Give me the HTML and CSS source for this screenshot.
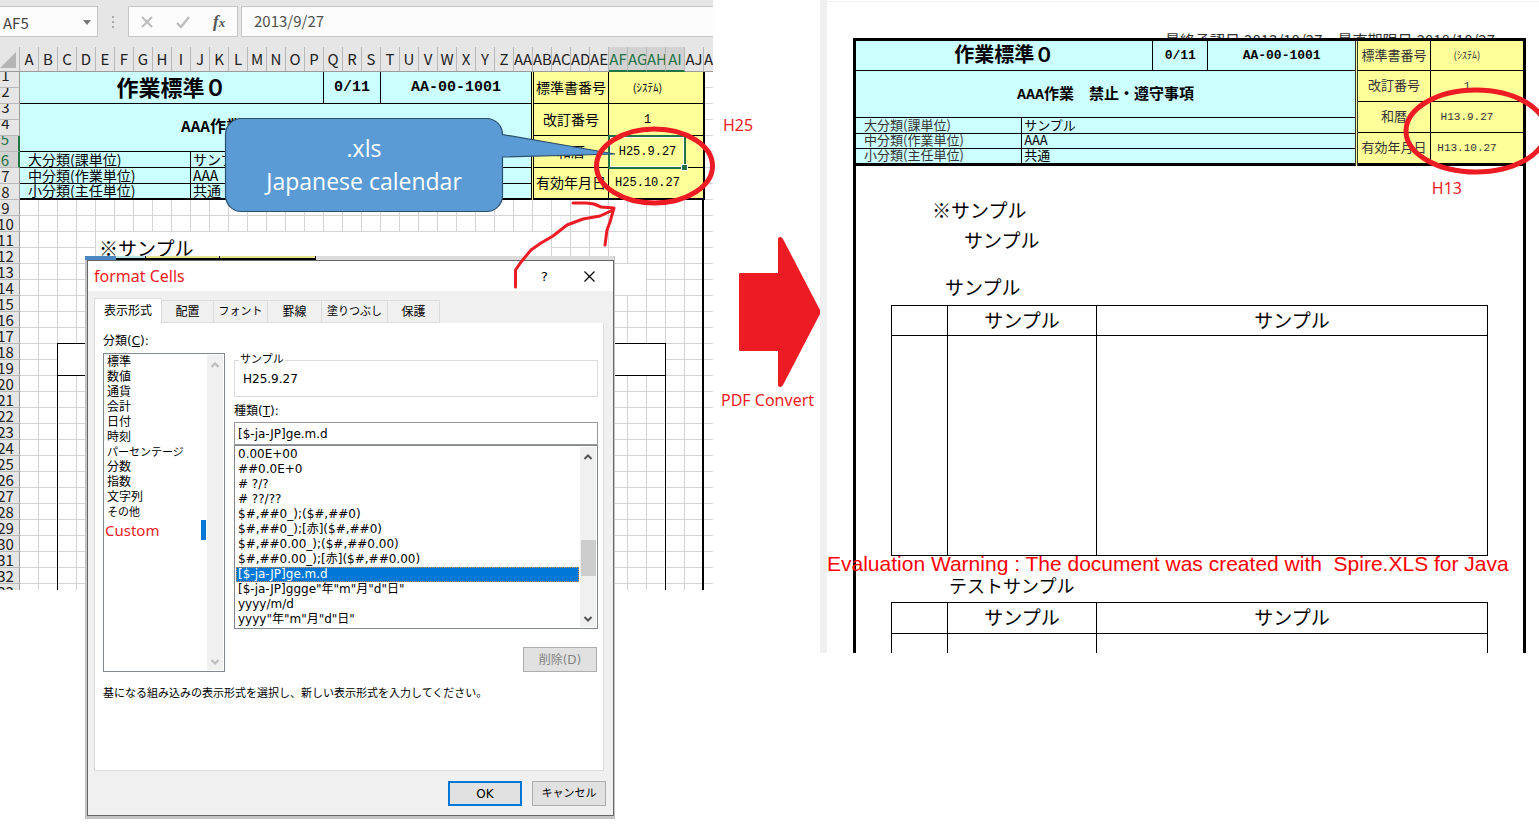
FILE: index.html
```html
<!DOCTYPE html>
<html lang="ja">
<head>
<meta charset="utf-8">
<title>PDF Convert</title>
<link rel="stylesheet" href="styles.css">
</head>
<body>
<main class="board">
  <section class="excel">
    <div class="formula-bar">
      <div class="name-box"><span>AF5</span><svg width="8" height="5" viewBox="0 0 8 5"><path d="M0 0h8L4 5z" fill="#777"/></svg></div>
      <svg class="dots" width="3" height="12" viewBox="0 0 3 12"><path d="M0 0h2v2H0zM0 5h2v2H0zM0 10h2v2H0z" fill="#aaa"/></svg>
      <div class="fx-box">
        <svg width="12" height="12" viewBox="0 0 12 12"><path d="M1 1l10 10M11 1L1 11" stroke="#bcbcbc" stroke-width="2" fill="none"/></svg>
        <svg width="14" height="12" viewBox="0 0 14 12"><path d="M1 7l4 4L13 1" stroke="#bcbcbc" stroke-width="2.4" fill="none"/></svg>
        <span class="fx">f<small>x</small></span>
      </div>
      <input class="formula" type="text" value="2013/9/27" aria-label="数式">
    </div>
    <div class="cols">
      <div class="corner"><svg width="16" height="16" viewBox="0 0 16 16"><path d="M16 0v16H0z" fill="#b5b5b5"/></svg></div>
      <div>A</div><div>B</div><div>C</div><div>D</div><div>E</div><div>F</div><div>G</div><div>H</div><div>I</div><div>J</div><div>K</div><div>L</div><div>M</div><div>N</div><div>O</div><div>P</div><div>Q</div><div>R</div><div>S</div><div>T</div><div>U</div><div>V</div><div>W</div><div>X</div><div>Y</div><div>Z</div><div>AA</div><div>AB</div><div>AC</div><div>AD</div><div>AE</div><div class="on">AF</div><div class="on">AG</div><div class="on">AH</div><div class="on">AI</div><div>AJ</div><div>AK</div>
    </div>
    <div class="sheet">
      <div class="rows">
        <div class="cut">1</div><div class="cut">2</div><div class="cut">3</div><div class="cut">4</div><div class="cut on">5</div><div class="on">6</div><div>7</div><div>8</div><div>9</div><div>10</div><div>11</div><div>12</div><div>13</div><div>14</div><div>15</div><div>16</div><div>17</div><div>18</div><div>19</div><div>20</div><div>21</div><div>22</div><div>23</div><div>24</div><div>25</div><div>26</div><div>27</div><div>28</div><div>29</div><div>30</div><div>31</div><div>32</div><div>33</div>
      </div>
      <div class="canvas">
        <div class="form-head">
          <table class="cyan">
            <colgroup><col class="w171"><col class="w133"><col class="w57"><col class="w151"></colgroup>
            <tr class="h32"><th colspan="2" class="title">作業標準０</th><th class="code">0/11</th><th class="code">AA-00-1001</th></tr>
            <tr class="h48"><th colspan="4" class="subject"><span class="latin">AAA</span>作業　禁止・遵守事項</th></tr>
            <tr class="h16"><td class="kind">大分類(課単位)</td><td colspan="3">サンプル</td></tr>
            <tr class="h16"><td class="kind">中分類(作業単位)</td><td colspan="3">AAA</td></tr>
            <tr class="h16"><td class="kind">小分類(主任単位)</td><td colspan="3">共通</td></tr>
          </table>
          <table class="yellow">
            <colgroup><col class="w75"><col class="w95"></colgroup>
            <tr class="h32"><td>標準書番号</td><td class="val small">(ｼｽﾃﾑ)</td></tr>
            <tr class="h32"><td>改訂番号</td><td class="val">1</td></tr>
            <tr class="h32"><td>和暦</td><td class="val">H25.9.27</td></tr>
            <tr class="h32"><td>有効年月日</td><td class="val">H25.10.27</td></tr>
          </table>
        </div>
        <div class="right-rule"></div>
        <div class="merged merged-a">※サンプル</div>
        <div class="merged merged-b"></div>
        <div class="outline"><div class="outline-head"></div></div>
        <div class="selection"></div>
      </div>
    </div>
  </section>

  <section class="between">
    <p class="note note-h25">H25</p>
    <svg class="big-arrow" width="82" height="150" viewBox="0 0 82 150"><path d="M0 37q0-1 1-1H39V2q0-2 2-2t3 2L82 75 44 148q-1 2-3 2t-2-2V114H1q-1 0-1-1z" fill="#ed1c24"/></svg>
    <p class="note note-pdf">PDF Convert</p>
  </section>

  <section class="pdf">
    <div class="dates">最終承認日:2013/10/27　最直期限日:2018/10/27</div>
    <div class="page-frame">
      <div class="form-head">
        <table class="cyan">
          <colgroup><col class="p166"><col class="p131"><col class="p55"><col></colgroup>
          <tr class="h30"><th colspan="2" class="title">作業標準０</th><th class="code">0/11</th><th class="code">AA-00-1001</th></tr>
          <tr class="h47"><th colspan="4" class="subject"><span class="latin">AAA</span>作業　禁止・遵守事項</th></tr>
          <tr class="h16"><td class="kind">大分類(課単位)</td><td colspan="3">サンプル</td></tr>
          <tr class="h15"><td class="kind">中分類(作業単位)</td><td colspan="3">AAA</td></tr>
          <tr class="h17"><td class="kind">小分類(主任単位)</td><td colspan="3">共通</td></tr>
        </table>
        <table class="yellow">
          <colgroup><col class="p73"><col></colgroup>
          <tr class="h30"><td>標準書番号</td><td class="val small">(ｼｽﾃﾑ)</td></tr>
          <tr class="h31"><td>改訂番号</td><td class="val">1</td></tr>
          <tr class="h31"><td>和暦</td><td class="val">H13.9.27</td></tr>
          <tr class="h33"><td>有効年月日</td><td class="val">H13.10.27</td></tr>
        </table>
      </div>
      <div class="page-body">
        <p class="line first">※サンプル</p>
        <p class="line second">サンプル</p>
        <p class="line third">サンプル</p>
        <table class="sample">
          <colgroup><col class="s57"><col class="s149"><col></colgroup>
          <tr class="h30"><td></td><td>サンプル</td><td>サンプル</td></tr>
          <tr class="h220"><td></td><td></td><td></td></tr>
        </table>
        <p class="line fourth">テストサンプル</p>
        <table class="sample">
          <colgroup><col class="s57"><col class="s149"><col></colgroup>
          <tr class="h31"><td></td><td>サンプル</td><td>サンプル</td></tr>
          <tr class="h220"><td></td><td></td><td></td></tr>
        </table>
      </div>
    </div>
    <p class="warning">Evaluation Warning : The document was created with&nbsp; Spire.XLS for Java</p>
    <p class="note note-h13">H13</p>
    <svg class="pdf-ring" width="144" height="90" viewBox="0 0 144 90"><ellipse cx="73" cy="45" rx="70" ry="41" fill="none" stroke="#ed1c24" stroke-width="5"/></svg>
  </section>

  <svg class="callout" width="394" height="96" viewBox="0 0 394 96"><path d="M17.500 1.500H262.500a16 16 0 0 1 16 16L391 37 278.500 40V78.500a16 16 0 0 1-16 16H17.500a16 16 0 0 1-16-16V17.500a16 16 0 0 1 16-16z" fill="#5b9bd5" stroke="#2b506e" stroke-width="1.200"/></svg>
  <div class="callout-text">.xls<br>Japanese calendar</div>

  <div class="shot">
    <div class="strip"><i class="blue"></i><i class="aqua"></i><i class="lemon"></i><i class="lemon wide"></i></div>
    <section class="dialog" role="dialog" aria-labelledby="dlg-title">
      <header class="titlebar">
        <h1 id="dlg-title">format Cells</h1>
        <button class="icon-btn" aria-label="ヘルプ">?</button>
        <button class="icon-btn" aria-label="閉じる"><svg width="11" height="11" viewBox="0 0 11 11"><path d="M.5.5l10 10M10.500.5l-10 10" stroke="#000" stroke-width="1.200" fill="none"/></svg></button>
      </header>
      <nav class="tabs">
        <button class="tab active">表示形式</button><button class="tab t52">配置</button><button class="tab t54 kana">フォント</button><button class="tab t54">罫線</button><button class="tab t66 kana">塗りつぶし</button><button class="tab t52">保護</button>
      </nav>
      <div class="panel">
        <div class="panel-cols">
          <div class="left">
            <div class="label">分類(<u>C</u>):</div>
            <div class="listbox cats">
              <ul>
                <li>標準</li><li>数値</li><li>通貨</li><li>会計</li><li>日付</li><li>時刻</li><li class="kana">パーセンテージ</li><li>分数</li><li>指数</li><li>文字列</li><li class="kana">その他</li><li class="custom">Custom</li>
              </ul>
              <div class="scroll pale">
                <svg width="8" height="6" viewBox="0 0 8 6"><path d="M.5 5L4 1.500 7.500 5" fill="none" stroke="#bbb" stroke-width="2"/></svg>
                <svg width="8" height="6" viewBox="0 0 8 6"><path d="M.5 1L4 4.500 7.500 1" fill="none" stroke="#bbb" stroke-width="2"/></svg>
              </div>
            </div>
          </div>
          <div class="right">
            <fieldset><legend>サンプル</legend>H25.9.27</fieldset>
            <label class="label" for="fmt">種類(<u>T</u>):</label>
            <input id="fmt" type="text" value="[$-ja-JP]ge.m.d">
            <div class="listbox formats">
              <ul>
                <li>0.00E+00</li><li>##0.0E+0</li><li># ?/?</li><li># ??/??</li><li>$#,##0_);($#,##0)</li><li>$#,##0_);[赤]($#,##0)</li><li>$#,##0.00_);($#,##0.00)</li><li>$#,##0.00_);[赤]($#,##0.00)</li><li class="picked">[$-ja-JP]ge.m.d</li><li>[$-ja-JP]ggge"年"m"月"d"日"</li><li>yyyy/m/d</li><li>yyyy"年"m"月"d"日"</li>
              </ul>
              <div class="scroll">
                <svg width="8" height="6" viewBox="0 0 8 6"><path d="M.5 5L4 1.500 7.500 5" fill="none" stroke="#555" stroke-width="2"/></svg>
                <div class="thumb"></div>
                <svg width="8" height="6" viewBox="0 0 8 6"><path d="M.5 1L4 4.500 7.500 1" fill="none" stroke="#555" stroke-width="2"/></svg>
              </div>
            </div>
            <button class="btn delete" disabled>削除(D)</button>
          </div>
        </div>
        <p class="help">基になる組み込みの表示形式を選択し、新しい表示形式を入力してください。</p>
      </div>
      <footer class="actions">
        <button class="btn ok">OK</button>
        <button class="btn kana">キャンセル</button>
      </footer>
    </section>
  </div>

  <svg class="ink" width="720" height="300" viewBox="0 0 720 300" fill="none" stroke="#ed1c24" stroke-linecap="round" stroke-linejoin="round">
    <ellipse cx="654.500" cy="166" rx="58" ry="37" stroke-width="5"/>
    <path stroke-width="3" d="M515.500 287V270L521 262 531 250 541 243 553 236 567 225 583 219 600 216 613 210M573 203H586L594 204 601 207 614 208 610 222 607 230 605 245"/>
  </svg>
</main>
</body>
</html>
```

FILE: styles.css
```css
* { box-sizing: border-box; }

body {
  margin: 0;
  background: #fff;
  color: #000;
  font-family: "Noto Sans CJK JP", sans-serif;
}

p, h1, ul { margin: 0; padding: 0; list-style: none; font-weight: 400; }
button, input { font: inherit; color: inherit; }
svg { display: block; }
table { border-collapse: separate; border-spacing: 0; table-layout: fixed; }
td, th { padding: 0; overflow: hidden; white-space: nowrap; }

.board {
  position: relative;
  display: grid;
  grid-template-columns: 713px 107px minmax(0, 1fr);
  align-items: start;
  min-height: 100vh;
  overflow: hidden;
}

/* Spreadsheet window */
.excel { height: 590px; overflow: hidden; background: #e6e6e6; }

.formula-bar { display: flex; align-items: center; height: 47px; padding: 6px 0 10px; }
.name-box, .fx-box, .formula { height: 31px; background: #fcfcfc; border: 1px solid #c6c6c6; }
.name-box {
  display: flex; align-items: center; justify-content: space-between;
  width: 98px; padding: 2px 6px 0 3px; border-left: 0;
  font-size: 15px; color: #444;
}
.dots { margin: 0 13px 0 14px; }
.fx-box { display: flex; align-items: center; gap: 23px; width: 110px; padding-left: 12px; }
.fx { font: italic bold 17px "Liberation Serif", serif; color: #555; }
.fx small { font-size: 13px; }
.formula {
  flex: 1; min-width: 0; margin-left: 3px; padding: 0 12px 2px; border-right: 0;
  font-size: 15px; color: #505050; outline: 0; border-radius: 0;
}

.cols { display: flex; height: 25px; border-bottom: 1px solid #9b9b9b; }
.cols div {
  flex: none; width: 19px; overflow: hidden;
  border-right: 1px solid #b8b8b8;
  font-size: 15px; line-height: 24px; text-align: center; color: #222;
}
.cols .corner { display: flex; justify-content: flex-end; align-items: flex-end; width: 20px; padding: 0 3px 3px 0; }
.cols .on { height: 25px; background: #d2d2d2; color: #217346; border-bottom: 2px solid #217346; }

.sheet { display: flex; }
.rows { flex: none; width: 20px; }
.rows div {
  display: flex; justify-content: center;
  height: 16px; overflow: hidden; padding-right: 8px;
  border-bottom: 1px solid #b8b8b8; border-right: 1px solid #9b9b9b;
  font-size: 15px; line-height: 15px; color: #222;
}
.rows .cut { line-height: 6px; }
.rows .on { background: #d2d2d2; color: #217346; border-right: 2px solid #217346; }

.canvas {
  position: relative; flex: 1; height: 528px; overflow: hidden;
  background:
    linear-gradient(to right, transparent 18px, #d4d4d4 18px) 0 0 / 19px 16px,
    linear-gradient(to bottom, transparent 15px, #d4d4d4 15px) 0 0 / 19px 16px,
    #fff;
}

/* Form heading shared by the sheet and the page */
.form-head { display: flex; }
.cyan { background: #cff; }
.yellow { background: #ff9; }
.form-head td, .form-head th { padding-bottom: 2px; border-right: 1px solid #000; border-bottom: 1px solid #000; }
.form-head tr:last-child td { border-bottom-width: 2px; }
.yellow td { text-align: center; }
.excel .cyan { width: 512px; }
.excel .yellow { width: 172px; margin-left: 1px; border-left: 1px solid #000; box-shadow: -1px 0 #ff9; }
.excel .yellow td:last-child { border-right-width: 2px; }
.excel .form-head { width: 685px; }
.excel td { font-size: 14px; line-height: 12px; }
.excel .title { padding-bottom: 4px; font-size: 22px; line-height: 24px; }
.excel .code { padding-bottom: 0; font-size: 15px; line-height: 20px; }
.excel .subject { font-size: 16px; line-height: 20px; }
.code, .latin, .val { font-family: "Liberation Mono", "Noto Sans CJK JP", monospace; }
.cyan td { padding-left: 2px; }
.cyan .kind { padding-left: 8px; }
.excel .val { padding-right: 17px; padding-bottom: 0; font-size: 12px; }
.form-head .small { font-family: "Noto Sans CJK JP", sans-serif; font-size: 11px; }
.excel .val.small { padding-bottom: 2px; }

.w171 { width: 171px; } .w133 { width: 133px; } .w57 { width: 57px; } .w151 { width: 151px; }
.w75 { width: 75px; } .w95 { width: 96px; }
.h15 { height: 15px; } .h16 { height: 16px; } .h17 { height: 17px; } .h30 { height: 30px; }
.h31 { height: 31px; } .h32 { height: 32px; } .h33 { height: 33px; } .h47 { height: 47px; }
.h48 { height: 48px; } .h220 { height: 220px; }

.right-rule { width: 684px; height: 400px; border-right: 2px solid #000; }
.merged { position: absolute; background: #fff; }
.merged-a { left: 76px; top: 160px; width: 455px; height: 40px; padding-left: 3px; font-size: 19px; line-height: 32px; }
.merged-b { left: 570px; top: 192px; width: 56px; height: 31px; }
.outline { position: absolute; left: 37px; top: 271px; width: 609px; height: 260px; border: 1px solid #000; }
.outline-head { height: 32px; background: #fff; border-bottom: 1px solid #000; }
.selection { position: absolute; left: 588px; top: 63px; width: 78px; height: 34px; border: 2px solid #217346; box-shadow: inset 0 0 0 1px #fff; }
.selection::after { content: ""; position: absolute; right: -4px; bottom: -4px; width: 5px; height: 5px; background: #217346; border: 1px solid #fff; box-sizing: content-box; }

/* Annotations */
.note { font-family: "Noto Sans", sans-serif; font-size: 16px; line-height: 20px; color: #ed1c24; }
.between { display: flex; flex-direction: column; padding-top: 115px; }
.note-h25 { padding-left: 10px; }
.big-arrow { margin: 102px 0 3px 26px; }
.note-pdf { padding-left: 8px; white-space: nowrap; }
.callout { position: absolute; left: 224px; top: 117px; }
.callout-text {
  position: absolute; left: 225px; top: 132px; width: 278px;
  font-family: "Open Sans", sans-serif; font-size: 23px; line-height: 33px; color: #fff; text-align: center;
}
.ink { position: absolute; left: 0; top: 0; pointer-events: none; }

/* Converted page */
.pdf { position: relative; height: 653px; overflow: hidden; padding: 32px 13px 0 26px; border-left: 7px solid #f0f0f0; }
.pdf::before { content: ""; position: absolute; left: 0; right: 0; top: 1px; height: 1px; background: #f0f0f0; }
.dates { height: 6px; overflow: hidden; padding-right: 31px; font-size: 15px; line-height: 15px; text-align: right; white-space: nowrap; color: #333; }
.page-frame { border: 3px solid #000; border-bottom: 0; }
.pdf .cyan { flex: 499; width: 0; }
.pdf .yellow { flex: 165; width: 0; border-left: 3px double #333; }
.pdf .form-head td:last-child, .pdf .form-head th:last-child { border-right: 0; }
.pdf .form-head tr:last-child td { border-bottom-width: 3px; }
.pdf td { font-size: 13px; line-height: 12px; }
.pdf .title { padding-bottom: 4px; font-size: 20px; line-height: 22px; }
.pdf .code { padding-bottom: 0; font-size: 13px; line-height: 16px; }
.pdf .subject { padding-bottom: 0; font-size: 15px; line-height: 20px; }
.pdf .kind, .pdf .yellow td { color: #333; }
.pdf .val { padding-right: 20px; padding-bottom: 0; font-size: 11px; }
.pdf .form-head .small { padding-bottom: 2px; font-size: 10px; }
.p166 { width: 33.3%; } .p131 { width: 26.3%; } .p55 { width: 11%; } .p73 { width: 73px; }

.page-body { padding: 29px 35px 0; }
.line { font-size: 19px; line-height: 30px; }
.first { padding-left: 41px; }
.second { padding-left: 73px; }
.third { padding: 17px 0 3px 54px; }
.fourth { padding: 14px 0 2px 58px; font-size: 18px; }
.sample { width: 100%; border-top: 1px solid #000; border-left: 1px solid #000; }
.sample td { padding-bottom: 2px; border-right: 1px solid #000; border-bottom: 1px solid #000; font-size: 19px; line-height: 26px; text-align: center; }
.s57 { width: 56px; } .s149 { width: 149px; }
.warning {
  position: absolute; left: 0; top: 551px;
  font-family: "Liberation Sans", sans-serif; font-size: 21px; line-height: 26px; color: #f00; white-space: nowrap;
}
.note-h13 { position: absolute; right: 77px; top: 178px; }
.pdf-ring { position: absolute; right: -8px; top: 86px; }

/* Format Cells dialog */
.shot { position: absolute; left: 85px; top: 256px; width: 530px; padding: 0 1px 3px 2px; background: #c4c4c4; }
.strip { display: flex; height: 4px; margin-left: -2px; background: #dcdcdc; }
.strip i { width: 74px; border-right: 1px solid #000; border-bottom: 2px solid #000; background: #e6e68a; }
.strip .blue { width: 31px; background: #4a86c0; border: 0; }
.strip .aqua { width: 30px; background: #b8e6e6; }
.strip .wide { width: 96px; }

.dialog { background: #f0f0f0; border: 1px solid #666; font-size: 12px; font-family: "DejaVu Sans", "Noto Sans CJK JP", sans-serif; }
.titlebar { display: flex; align-items: center; height: 30px; padding: 0 18px 0 6px; background: #fff; }
.titlebar h1 { flex: 1; font-family: "Noto Sans", sans-serif; font-size: 16px; line-height: 20px; color: #ed1c24; }
.icon-btn { display: flex; align-items: center; justify-content: center; width: 45px; height: 30px; padding: 0; border: 0; background: none; font-size: 13px; }
.icon-btn:last-child { width: 11px; margin-left: 17px; }

.tabs { display: flex; align-items: flex-end; height: 32px; padding-left: 6px; }
.tab { height: 23px; padding: 0; border: 1px solid #dcdcdc; border-width: 1px 1px 1px 0; background: #f0f0f0; line-height: 18px; white-space: nowrap; }
.tab.active { width: 68px; height: 25px; border-left-width: 1px; border-bottom: 0; background: #fff; }
.t52 { width: 52px; } .t54 { width: 54px; } .t66 { width: 66px; }
.kana { font-size: 11px; }

.panel { height: 448px; margin: 0 9px 0 6px; padding: 9px 5px 0 8px; border: 1px solid #dcdcdc; border-top: 0; background: #fff; }
.panel-cols { display: flex; gap: 9px; }
.left { width: 122px; }
.right { display: flex; flex-direction: column; flex: 1; min-width: 0; padding-top: 20px; }
.label { display: block; height: 21px; line-height: 18px; }
.listbox { display: flex; border: 1px solid #828790; background: #fff; }
.listbox ul { flex: 1; padding: 1px 0 0 1px; min-width: 0; }
.listbox li { height: 15px; padding-left: 2px; line-height: 15px; white-space: nowrap; }
.cats { height: 319px; }
.listbox .custom { height: 20px; padding: 0; border-right: 5px solid #0078d7; font-family: "Noto Sans", sans-serif; font-size: 15px; line-height: 20px; color: #ed1c24; background: #fff; }
.scroll { display: flex; flex-direction: column; justify-content: space-between; align-items: center; width: 16px; margin: 1px; padding: 7px 0 5px; background: #f0f0f0; }
fieldset { height: 45px; margin: 0; padding: 3px 8px 0; border: 1px solid #dcdcdc; line-height: 16px; }
legend { margin-left: -4px; padding: 0 1px; font-size: 11px; line-height: 16px; }
.right .label { height: 25px; padding-top: 5px; }
#fmt { height: 23px; padding: 0 3px; border: 1px solid #999; border-radius: 0; outline: 0; }
.formats { height: 184px; }
.thumb { width: 15px; height: 36px; margin-top: 0; margin-bottom: 0; background: #cdcdcd; }
.formats .thumb { margin-top: 40px; }
.listbox .picked { background: #0078d7; color: #fff; outline: 1px dotted #d98b3a; outline-offset: -1px; }
.btn { width: 74px; height: 25px; padding: 0; border: 1px solid #adadad; background: #e1e1e1; line-height: 18px; }
.btn.ok { border: 2px solid #0078d7; }
.delete { align-self: flex-end; margin: 18px 1px 0 0; color: #838383; }
.help { padding-top: 13px; font-size: 11px; line-height: 18px; white-space: nowrap; }
.actions { display: flex; justify-content: flex-end; gap: 10px; padding: 10px 7px 9px; }
```
